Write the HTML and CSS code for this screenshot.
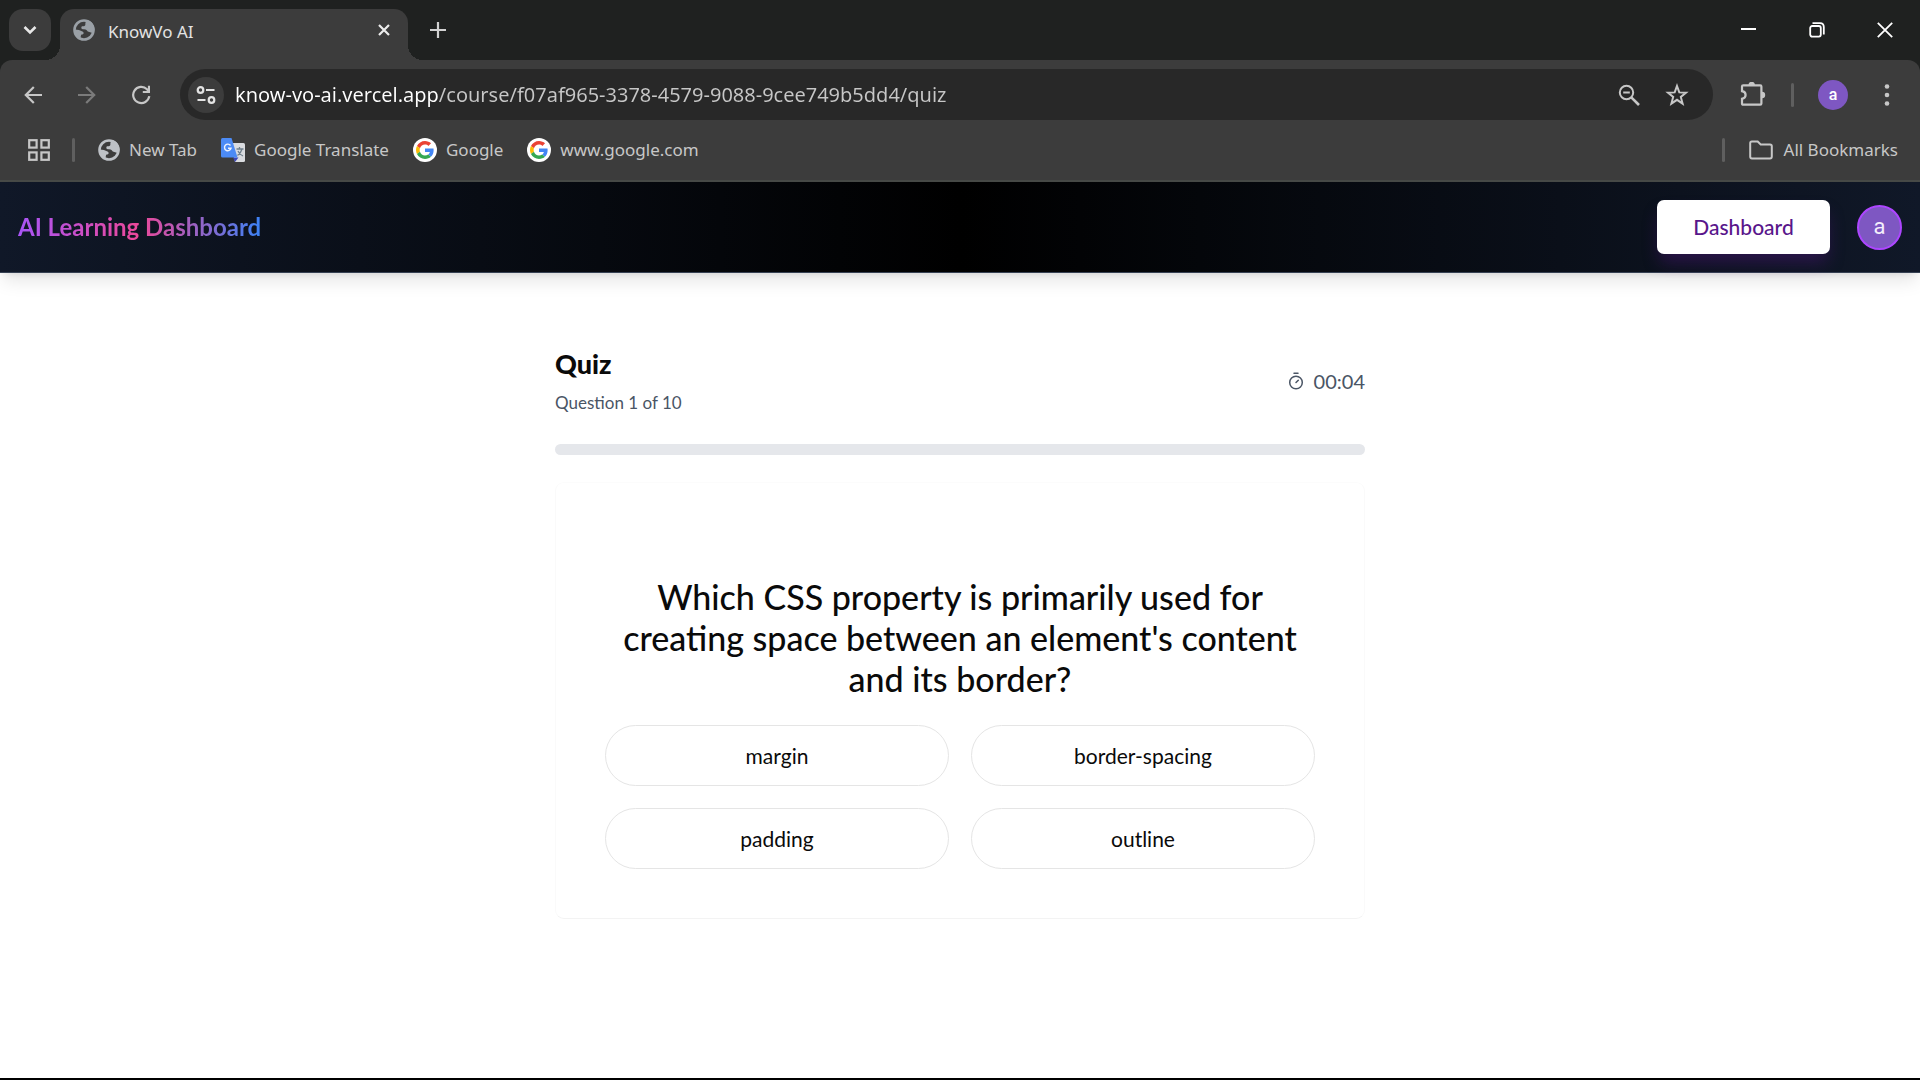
FILE: index.html
```html
<!DOCTYPE html>
<html lang="en">
<head>
<meta charset="utf-8">
<meta name="viewport" content="width=device-width, initial-scale=1">
<title>KnowVo AI</title>
<link rel="stylesheet" href="styles.css">
</head>
<body>
<svg class="sprite" aria-hidden="true">
  <symbol id="globe" viewBox="0 0 22 22">
    <circle cx="11" cy="11" r="9.5" fill="none" stroke="currentColor" stroke-width="2.6"/>
    <path fill="currentColor" d="M14 1 L12.5 3.5 C12 5 13 5.8 11.5 7 C10 7.400 8.500 6.800 8.300 8.400 C8.200 10 9.500 10 11 10.200 C13.500 10.300 13.800 11.500 14.800 12.600 L19.500 14 L21.500 11 C21.500 6 18.500 2 14 1Z"/>
    <path fill="currentColor" d="M1 10.500 C4 10.300 7 11 9.500 12.500 C11.500 13.500 10.800 15.500 8.600 15.600 C7.500 15.800 8.200 17.800 7.200 20 C3 18.500 .8 15 1 10.500Z"/>
  </symbol>
  <symbol id="google" viewBox="0 0 24 24">
    <circle cx="12" cy="12" r="12" fill="#fff"/>
    <g transform="translate(3 3) scale(.375)">
      <path fill="#EA4335" d="M24 9.500c3.540 0 6.710 1.220 9.210 3.600l6.850-6.850C35.900 2.380 30.470 0 24 0 14.620 0 6.510 5.380 2.560 13.220l7.980 6.190C12.430 13.720 17.740 9.500 24 9.500z"/>
      <path fill="#4285F4" d="M46.980 24.550c0-1.570-.15-3.090-.38-4.550H24v9.020h12.940c-.58 2.960-2.260 5.480-4.780 7.180l7.730 6c4.510-4.180 7.090-10.360 7.090-17.650z"/>
      <path fill="#FBBC05" d="M10.530 28.590c-.48-1.450-.76-2.990-.76-4.590s.27-3.140.76-4.590l-7.980-6.190C.92 16.460 0 20.120 0 24s.92 7.540 2.560 10.780l7.970-6.190z"/>
      <path fill="#34A853" d="M24 48c6.480 0 11.930-2.130 15.890-5.810l-7.730-6c-2.150 1.450-4.920 2.300-8.160 2.300-6.260 0-11.570-4.220-13.470-9.910l-7.980 6.190C6.510 42.620 14.620 48 24 48z"/>
    </g>
  </symbol>
</svg>

<div class="browser">
  <div class="tabstrip">
    <button class="tab-search" type="button" aria-label="Search tabs">
      <svg width="14" height="10" viewBox="0 0 14 10"><path d="M1.500 2 7 7.500 12.500 2" fill="none" stroke="#e8e8e8" stroke-width="2.600"/></svg>
    </button>
    <div class="tab">
      <svg class="tab-favicon" width="22" height="22"><use href="#globe"/></svg>
      <span class="tab-title">KnowVo AI</span>
      <button class="tab-close" type="button" aria-label="Close tab">
        <svg width="12" height="12" viewBox="0 0 12 12"><path d="M1 1 11 11M11 1 1 11" fill="none" stroke="#ececec" stroke-width="2.200"/></svg>
      </button>
    </div>
    <button class="new-tab" type="button" aria-label="New tab">
      <svg width="16" height="16" viewBox="0 0 16 16"><path d="M8 0V16M0 8H16" stroke="#d2d2d2" stroke-width="2.200"/></svg>
    </button>
    <div class="window-controls">
      <button type="button" aria-label="Minimize"><svg width="16" height="16" viewBox="0 0 16 16"><path d="M0 7H15" stroke="#fff" stroke-width="2"/></svg></button>
      <button type="button" aria-label="Restore"><svg width="16" height="16" viewBox="0 0 16 16" fill="none" stroke="#fff" stroke-width="1.800"><rect x="1.200" y="4" width="10.600" height="10.600" rx="2"/><path d="M3.500 1.200H11Q14.800 1.200 14.800 5V12.500"/></svg></button>
      <button type="button" aria-label="Close"><svg width="16" height="16" viewBox="0 0 16 16"><path d="M.8.8 15.200 15.200M15.200.8.8 15.200" stroke="#fff" stroke-width="1.800"/></svg></button>
    </div>
  </div>

  <div class="toolbar">
    <div class="nav-buttons">
      <button type="button" aria-label="Back"><svg width="18" height="18" viewBox="0 0 18 18"><path d="M18 9H2M9.800 1 1.800 9 9.800 17" fill="none" stroke="#c7c7c7" stroke-width="2.200"/></svg></button>
      <button type="button" aria-label="Forward"><svg width="18" height="18" viewBox="0 0 18 18"><path d="M0 9H16M8.200 1 16.200 9 8.200 17" fill="none" stroke="#7b7b7b" stroke-width="2.200"/></svg></button>
      <button type="button" aria-label="Reload"><svg width="20" height="20" viewBox="0 0 20 20"><path d="M18.300 11.200A8.100 8.100 0 1 1 16 4.200L17.500 6" fill="none" stroke="#c7c7c7" stroke-width="2.200"/><path d="M19 .8V8H11.800V5.900H16.900V.8Z" fill="#c7c7c7"/></svg></button>
    </div>
    <div class="omnibox">
      <button class="site-info" type="button" aria-label="View site information"><svg width="20" height="18" viewBox="0 0 20 18" fill="none" stroke="#e3e3e3" stroke-width="2.200"><circle cx="4.500" cy="4" r="2.800"/><path d="M10 4H18.500M1.500 14H9.500"/><circle cx="15.500" cy="14" r="2.800"/></svg></button>
      <input class="address" type="text" aria-label="Address" value="know-vo-ai.vercel.app/course/f07af965-3378-4579-9088-9cee749b5dd4/quiz">
      <button class="omni-button" type="button" aria-label="Zoom"><svg width="22" height="22" viewBox="0 0 22 22" fill="none" stroke="#c7c7c7"><circle cx="8.500" cy="8.500" r="6.700" stroke-width="2"/><path d="M13.300 13.300 21 21" stroke-width="2.600"/><path d="M5.200 8.500H11.800" stroke-width="2"/></svg></button>
      <button class="omni-button" type="button" aria-label="Bookmark this page"><svg width="24" height="24" viewBox="0 0 24 24"><path d="M12 3 14.300 9.400 21 9.700 15.800 13.900 17.600 20.600 12 16.800 6.400 20.600 8.200 13.900 3 9.700 9.700 9.400Z" fill="none" stroke="#c7c7c7" stroke-width="2"/></svg></button>
    </div>
    <div class="toolbar-actions">
      <button class="extensions" type="button" aria-label="Extensions"><svg width="26" height="26" viewBox="0 0 26 26"><path d="M2 4.500Q2 3.300 3.200 3.300H20.200Q21.400 3.300 21.400 4.500V21.500Q21.400 22.700 20.200 22.700H3.200Q2 22.700 2 21.500V16.800Q5.600 16.200 5.600 13T2 9.200Z" fill="none" stroke="#c7c7c7" stroke-width="2.200"/><path d="M8.500 3A3 3 0 0 1 14.900 3ZM22 9.800A3 3 0 0 1 22 16.200Z" fill="#c7c7c7"/></svg></button>
      <span class="separator"></span>
      <button class="profile" type="button" aria-label="Profile">a</button>
      <button class="menu" type="button" aria-label="Browser menu"><svg width="6" height="22" viewBox="0 0 6 22" fill="#c7c7c7"><circle cx="3" cy="2.500" r="2.300"/><circle cx="3" cy="11" r="2.300"/><circle cx="3" cy="19.500" r="2.300"/></svg></button>
    </div>
  </div>

  <div class="bookmarks">
    <button class="apps" type="button" aria-label="Apps"><svg width="22" height="22" viewBox="0 0 22 22" fill="none" stroke="#c7c7c7" stroke-width="2.200"><rect x="1.200" y="1.200" width="7.400" height="7.400"/><rect x="13.400" y="1.200" width="7.400" height="7.400"/><rect x="1.200" y="13.400" width="7.400" height="7.400"/><rect x="13.400" y="13.400" width="7.400" height="7.400"/></svg></button>
    <span class="separator"></span>
    <a class="bookmark" href="#"><svg class="globe-light" width="22" height="22"><use href="#globe"/></svg>New Tab</a>
    <a class="bookmark" href="#"><svg width="24" height="24" viewBox="0 0 24 24"><path d="M10 5H22.500Q24 5 24 6.500V22.500Q24 24 22.500 24H14Z" fill="#dadce0"/><path d="M12 19.500H17.500L14 24Z" fill="#3c46b8"/><path d="M1.500 0H10.500L16.500 19.500H1.500Q0 19.500 0 18V1.500Q0 0 1.500 0Z" fill="#4c8bf5"/><path d="M9.500 7.500A3.300 3.300 0 1 0 10 10.300H7" fill="none" stroke="#eef3fd" stroke-width="1.400"/><path d="M15.500 11H22.500M18.500 9V11M21 11Q20 15 16.500 17.500M17 13Q18.500 16.500 22 18" fill="none" stroke="#6f7f8c" stroke-width="1.300"/></svg>Google Translate</a>
    <a class="bookmark" href="#"><svg width="24" height="24"><use href="#google"/></svg>Google</a>
    <a class="bookmark" href="#"><svg width="24" height="24"><use href="#google"/></svg>www.google.com</a>
    <span class="separator separator-end"></span>
    <button class="bookmark all-bookmarks" type="button"><svg width="24" height="20" viewBox="0 0 24 20"><path d="M1.200 16.500V3.200Q1.200 1.500 2.800 1.500H8.700L11.700 4.500H21Q22.800 4.500 22.800 6.200V16.500Q22.800 18.500 21 18.500H3Q1.200 18.500 1.200 16.500Z" fill="none" stroke="#c7c7c7" stroke-width="2"/></svg>All Bookmarks</button>
  </div>
</div>

<header class="site-header">
  <h1 class="brand">AI Learning Dashboard</h1>
  <div class="header-actions">
    <button class="dashboard-button" type="button">Dashboard</button>
    <button class="avatar" type="button" aria-label="Account">a</button>
  </div>
</header>

<main class="quiz">
  <div class="quiz-header">
    <div>
      <h2 class="quiz-title">Quiz</h2>
      <p class="quiz-count">Question 1 of 10</p>
    </div>
    <div class="timer">
      <svg width="18" height="18" viewBox="0 0 18 18" fill="none" stroke="currentColor" stroke-width="1.500" stroke-linecap="round"><path d="M7 1.300H11M9 10.500 11.300 8.200"/><circle cx="9" cy="10.500" r="6.300"/></svg>
      <span>00:04</span>
    </div>
  </div>
  <div class="progress" role="progressbar" aria-label="Quiz progress" aria-valuemin="0" aria-valuemax="10" aria-valuenow="0"></div>
  <section class="card">
    <h3 class="question">Which CSS property is primarily used for creating space between an element's content and its border?</h3>
    <div class="options">
      <button class="option" type="button">margin</button>
      <button class="option" type="button">border-spacing</button>
      <button class="option" type="button">padding</button>
      <button class="option" type="button">outline</button>
    </div>
  </section>
</main>
</body>
</html>
```
FILE: styles.css
```css
* { box-sizing: border-box; }

body {
  margin: 0;
  min-height: 100vh;
  display: flex;
  flex-direction: column;
  background: #fff;
  border-bottom: 2px solid #000;
  color: #0a0a0a;
  font-family: Lato, "Open Sans", sans-serif;
}

button {
  display: flex;
  align-items: center;
  justify-content: center;
  padding: 0;
  border: 0;
  background: none;
  font: inherit;
  color: inherit;
}

h1, h2, h3, p { margin: 0; }
svg { flex: none; display: block; }
.sprite { position: absolute; width: 0; height: 0; }

/* Browser chrome */
.browser {
  background: #1f2120;
  color: #c7c7c7;
  font-family: "Noto Sans", sans-serif;
}

.tabstrip {
  display: flex;
  height: 60px;
  padding: 9px 1px 0 9px;
}

.tab-search {
  width: 42px;
  height: 42px;
  border-radius: 14px;
  background: #3c3c3c;
}

.tab {
  position: relative;
  display: flex;
  align-items: center;
  width: 348px;
  margin-left: 9px;
  padding: 0 8px 9px 13px;
  border-radius: 14px 14px 0 0;
  background: #3c3c3c;
  color: #e3e3e3;
}

.tab::before,
.tab::after {
  content: "";
  position: absolute;
  bottom: 0;
  width: 15px;
  height: 15px;
}
.tab::before { right: 100%; background: radial-gradient(circle at 0 0, transparent 15px, #3c3c3c 15px); }
.tab::after { left: 100%; background: radial-gradient(circle at 100% 0, transparent 15px, #3c3c3c 15px); }

.tab-favicon { color: #9aa0a6; }
.tab-title { flex: 1; margin-left: 13px; padding-top: 3px; font-size: 17px; line-height: 24px; }
.tab-close { width: 32px; height: 32px; }
.new-tab { width: 42px; height: 42px; margin-left: 9px; }

.window-controls { display: flex; margin-left: auto; }
.window-controls button { width: 68px; height: 42px; }

.toolbar {
  display: flex;
  height: 60px;
  padding: 9px 9px 0 6px;
  border-radius: 12px 12px 0 0;
  background: #3c3c3c;
}

.nav-buttons { display: flex; margin-right: 12px; }
.nav-buttons button { width: 54px; }

.omnibox {
  flex: 1;
  display: flex;
  align-items: center;
  padding: 0 12px 0 8px;
  border-radius: 26px;
  background: #282828;
}

.site-info {
  width: 36px;
  height: 36px;
  border-radius: 50%;
  background: #3c3c3c;
}

.address {
  flex: 1;
  min-width: 0;
  height: 40px;
  margin-left: 11px;
  padding: 0;
  border: 0;
  outline: 0;
  background: linear-gradient(90deg, #fff 203px, #c7c7c7 203px);
  -webkit-background-clip: text;
  background-clip: text;
  color: transparent;
  font: 20px/28px "Noto Sans", sans-serif;
}

.omni-button { width: 48px; height: 48px; }

.toolbar-actions { display: flex; align-items: center; }
.extensions { width: 48px; height: 48px; margin-left: 16px; }

.separator {
  width: 3px;
  height: 24px;
  border-radius: 2px;
  background: #5f5f5f;
}
.toolbar .separator { margin: 0 24px 0 14px; }

.profile {
  width: 30px;
  height: 30px;
  border-radius: 50%;
  background: #7e57c2;
  color: #fff;
  font: 500 16px/20px Roboto, sans-serif;
}
.menu { width: 48px; height: 48px; margin-left: 15px; }

.bookmarks {
  display: flex;
  align-items: center;
  height: 62px;
  padding: 0 22px 0 28px;
  border-bottom: 2px solid #474a47;
  background: #3c3c3c;
}
.apps { margin-right: 22px; }

.bookmark {
  display: flex;
  align-items: center;
  gap: 9px;
  margin-left: 24px;
  color: #c7c7c7;
  font-size: 17px;
  line-height: 24px;
  text-decoration: none;
}
.bookmarks .separator { margin-right: -1px; }
.globe-light { color: #bdc1c6; }
.bookmarks .separator-end { margin-left: auto; margin-right: 0; }
.all-bookmarks { gap: 11px; }

/* Site header */
.site-header {
  position: relative;
  display: flex;
  align-items: center;
  justify-content: space-between;
  padding: 18px;
  border-bottom: 1px solid #364153;
  background: linear-gradient(90deg, #101828, #000 50%, #101828);
  box-shadow: 0 11px 17px -3px rgba(0, 0, 0, .1), 0 4px 7px -4px rgba(0, 0, 0, .1);
}

.brand {
  background: linear-gradient(90deg, #a855f7, #ec4899 50%, #3b82f6);
  -webkit-background-clip: text;
  background-clip: text;
  color: transparent;
  font-size: 24px;
  font-weight: 700;
  line-height: 30px;
}

.header-actions { display: flex; align-items: center; gap: 27px; }

.dashboard-button {
  width: 173px;
  height: 54px;
  border-radius: 7px;
  background: #fff;
  box-shadow: 0 11px 17px -3px rgba(89, 22, 139, .4);
  color: #59168b;
  font-size: 21px;
  font-weight: 500;
  line-height: 28px;
}

.avatar {
  width: 45px;
  height: 45px;
  border: 2px solid #ad46ff;
  border-radius: 50%;
  background: #7e57c2;
  color: #f3edfb;
  font: 400 22px/24px Roboto, sans-serif;
}

/* Quiz */
.quiz {
  width: 100%;
  max-width: 810px;
  margin: 0 auto;
  padding: 73px 0;
}

.quiz-header {
  display: flex;
  align-items: center;
  justify-content: space-between;
  margin-bottom: 28px;
}
.quiz-title { font-size: 27px; font-weight: 900; line-height: 35px; }
.quiz-count { margin-top: 9px; font-size: 17px; line-height: 26px; color: #4a5565; }

.timer {
  display: flex;
  align-items: center;
  gap: 9px;
  color: #4a5565;
  font-size: 20px;
  line-height: 26px;
}

.progress {
  height: 11px;
  margin-bottom: 27px;
  border-radius: 6px;
  background: #e5e7eb;
}

.card {
  padding: 93px 49px 49px;
  border: 1px solid #fafafa;
  border-top-color: #fcfcfc;
  border-bottom-color: #f3f3f3;
  border-radius: 9px;
}

.question {
  margin-bottom: 26px;
  font-size: 34px;
  font-weight: 500;
  line-height: 41px;
  text-align: center;
}

.options {
  display: grid;
  grid-template-columns: 1fr 1fr;
  gap: 22px;
}

.option {
  height: 61px;
  border: 1px solid #e5e5e5;
  border-radius: 31px;
  font-size: 21px;
  line-height: 28px;
}
```
